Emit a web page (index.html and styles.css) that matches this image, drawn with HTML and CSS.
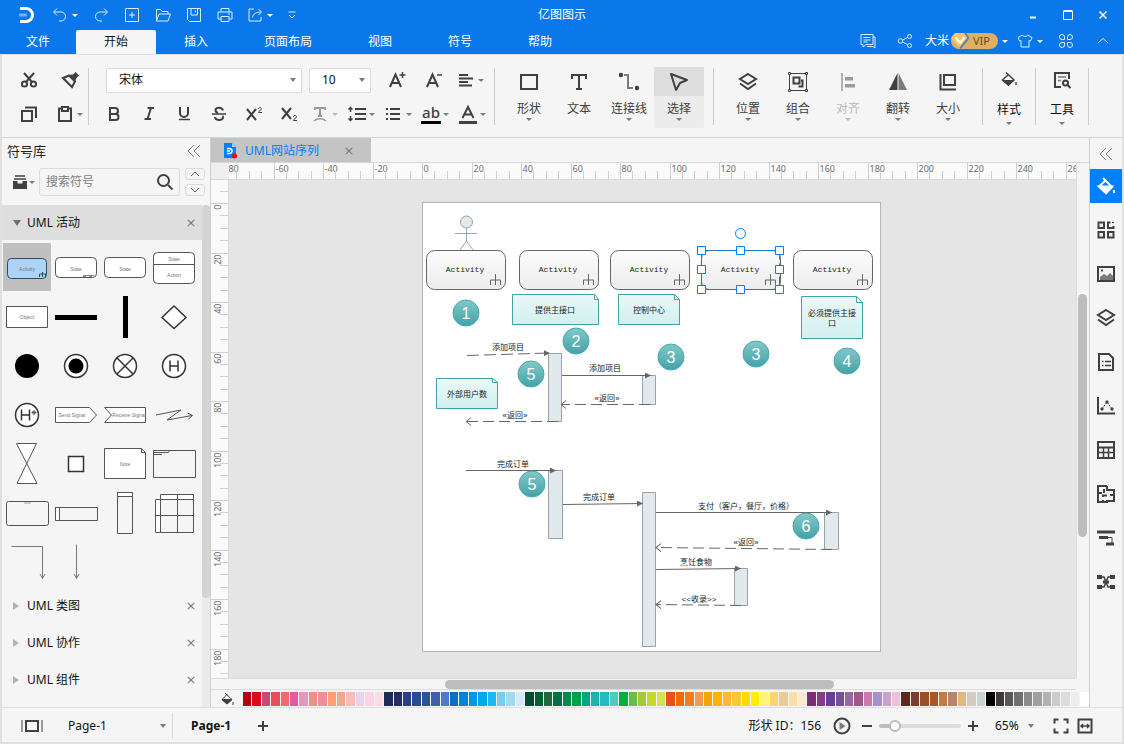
FILE: index.html
```
<!DOCTYPE html>
<html lang="zh-CN">
<head>
    <meta charset="UTF-8">
    <title>亿图图示</title>
    <link rel="stylesheet" href="styles.css">
</head>
<body>
<div class="app">
    <header class="header">
        <div class="titlebar">
            <div class="quick">
                <svg class="logo" viewBox="0 0 16 18"><path d="M1 2.500h6a6.500 6.500 0 0 1 0 13H1" fill="none" stroke="#fff" stroke-width="3"/><path d="M0 9h8" stroke="#6db3ff" stroke-width="3"/></svg>
                <button class="q split" aria-label="撤销"><svg class="thin" viewBox="0 0 16 16"><path d="M5 1.500L1.500 5 5 8.500M2 5h7a4 4 0 0 1 0 9H7"/></svg><i class="caret"></i></button>
                <button class="q" aria-label="重做"><svg class="thin" viewBox="0 0 16 16"><path d="M11 1.500L14.500 5 11 8.500M14 5H7a4 4 0 0 0 0 9h2"/></svg></button>
                <button class="q" aria-label="新建"><svg class="thin" viewBox="0 0 16 16"><path d="M1.500 1.500h13v13h-13zM8 5v6M5 8h6"/></svg></button>
                <button class="q" aria-label="打开"><svg class="thin" viewBox="0 0 16 16"><path d="M1.500 14V2.500h4l1.500 2h6V7M1.500 14L4 7h11.500L13 14z"/></svg></button>
                <button class="q" aria-label="保存"><svg class="thin" viewBox="0 0 16 16"><path d="M1.500 1.500h13v13h-11l-2-2zM5 2v6h6.500V2M9.500 3.500v2"/></svg></button>
                <button class="q" aria-label="打印"><svg class="thin" viewBox="0 0 16 16"><path d="M4 5V1.500h8V5M4 12H1V5h14v7h-3M4 9.500h8v5H4zM11 7h2"/></svg></button>
                <button class="q split" aria-label="导出"><svg class="thin" viewBox="0 0 16 16"><path d="M7 2H2v12h12v-4M5.500 10.500C6 7 9 5 14 5M11.500 2L14.500 5l-3 3"/></svg><i class="caret"></i></button>
                <button class="q more" aria-label="更多"><svg class="thin" viewBox="0 0 16 16"><path d="M4.500 5h7M5 8l3 3 3-3"/></svg></button>
            </div>
            <div class="title">亿图图示</div>
            <div class="window">
                <button aria-label="最小化"><svg viewBox="0 0 10 10"><path d="M2 7.500h6" stroke-width="2"/></svg></button>
                <button aria-label="最大化"><svg viewBox="0 0 10 10"><path d="M.500 1.500h9V9.500h-9zM.500 .500h9"/></svg></button>
                <button aria-label="关闭"><svg viewBox="0 0 10 10"><path d="M1.500 1.500l7 7M8.500 1.500l-7 7" stroke-width="1.500"/></svg></button>
            </div>
        </div>
        <div class="menubar">
            <nav class="menu">
                <button>文件</button>
                <button class="active">开始</button>
                <button>插入</button>
                <button>页面布局</button>
                <button>视图</button>
                <button>符号</button>
                <button>帮助</button>
            </nav>
            <div class="account">
                <button class="q" aria-label="评论"><svg class="thin" viewBox="0 0 16 16"><path d="M13 11.500V1.500H1v10h2V14l3-2.500zM13 4h2v11l-2-1.500H7M3.500 4.500h7M3.500 7h7M3.500 9h4"/></svg></button>
                <button class="q share" aria-label="分享"><svg class="thin" viewBox="0 0 16 16"><circle cx="3.500" cy="8" r="2.300"/><circle cx="12.500" cy="3.500" r="2"/><circle cx="12.500" cy="12.500" r="2"/><path d="M5.500 7l5-2.500M5.500 9l5 2.500"/></svg></button>
                <span>大米</span>
                <button class="vip"><svg viewBox="0 0 18 16"><path d="M4 0h10l4 5-9 11L0 5z" fill="#f6c766"/><path d="M4.500 4.500L9 10l4.500-5.500" fill="none" stroke="#fff" stroke-width="2"/><path d="M14 0l3.500 5L9 15.500" fill="none" stroke="#5d87b0"/></svg>VIP</button>
                <i class="caret"></i>
                <button class="q split shirt" aria-label="主题"><svg class="thin" viewBox="0 0 16 16"><path d="M5.500 2L1 4.500 2.500 8 4 7.500V14h8V7.500l1.500.500L15 4.500 10.500 2C9.500 4 6.500 4 5.500 2z"/></svg><i class="caret"></i></button>
                <button class="q apps" aria-label="应用"><svg class="thin" viewBox="0 0 16 16"><path d="M6.500 6.500H4A2.500 2.500 0 1 1 6.500 4zM9.500 6.500H12A2.500 2.500 0 1 0 9.500 4zM6.500 9.500H4A2.500 2.500 0 1 0 6.500 12zM9.500 9.500H12A2.500 2.500 0 1 1 9.500 12z"/></svg></button>
                <button class="q" aria-label="收起"><svg class="thin" viewBox="0 0 16 16"><path d="M3 10l5-4.500 5 4.500"/></svg></button>
            </div>
        </div>
    </header>

    <div class="toolbar">
        <div class="group clipboard">
            <div class="row">
                <button class="tool" aria-label="剪切"><svg viewBox="0 0 20 20"><circle cx="5.500" cy="14" r="2.600"/><circle cx="14.500" cy="14" r="2.600"/><path d="M7 12l8-9M13 12L5 3"/></svg></button>
                <button class="tool" aria-label="格式刷"><svg viewBox="0 0 20 20"><path d="M3 8l6-2.500 6 6L12 17z"/><path d="M8.500 5l6.500 6.500 1.500-3.500L19 5.500 15.500 2 13 4.500z" fill="currentColor" stroke="none"/></svg></button>
            </div>
            <div class="row">
                <button class="tool" aria-label="复制"><svg viewBox="0 0 20 20"><path d="M3 7h10v10H3zM6 3.500h11V14"/></svg></button>
                <button class="tool split" aria-label="粘贴"><svg viewBox="0 0 20 20"><path d="M6.500 4.500H4V17h12V4.500h-2.500M7 3h6v4H7z"/></svg><i class="caret"></i></button>
            </div>
        </div>
        <hr class="first">
        <div class="group">
            <div class="row">
                <label class="pick font"><select aria-label="字体"><option>宋体</option></select></label>
                <label class="pick size"><select aria-label="字号"><option>10</option></select></label>
                <button class="tool" aria-label="增大字号"><svg viewBox="0 0 20 20"><path d="M3 17L8.500 4.500 14 17M5 13h7"/><path d="M12.500 5h6M15.500 2v6" stroke-width="1.500"/></svg></button>
                <button class="tool" aria-label="减小字号"><svg viewBox="0 0 20 20"><path d="M3 17L8.500 4.500 14 17M5 13h7"/><path d="M13 5h5" stroke-width="1.500"/></svg></button>
                <button class="tool split" aria-label="对齐方式"><svg viewBox="0 0 20 20"><path d="M3 5h9M3 8.500h14M3 12h9M3 15.500h13"/></svg><i class="caret"></i></button>
            </div>
            <div class="row second">
                <button class="tool" aria-label="加粗"><svg viewBox="0 0 20 20"><path d="M6 4h5a3 3 0 0 1 0 6H6zM6 10h5.500a3 3 0 0 1 0 6H6z"/></svg></button>
                <button class="tool" aria-label="斜体"><svg viewBox="0 0 20 20"><path d="M8.500 4H15M5.500 15H12M12 4L8.500 15"/></svg></button>
                <button class="tool" aria-label="下划线"><svg viewBox="0 0 20 20"><path d="M6 3v6a4 4 0 0 0 8 0V3"/><path d="M5 15.500h11" stroke-width="1.500"/></svg></button>
                <button class="tool" aria-label="删除线"><svg viewBox="0 0 20 20"><path d="M14 6.500C13 3 7 3 6.500 6c0 1.500 1 2.500 2.500 3M6 13c.500 4 8 4 8 .500 0-.500 0-1-.500-1.500"/><path d="M3 10h14" stroke-width="1.500"/></svg></button>
                <button class="tool" aria-label="上标"><svg viewBox="0 0 20 20"><path d="M3 5l9 11M12 5L3 16"/><path d="M14.500 5c0-2 3-2 3 0 0 1-3 2-3 3.500h3.500" stroke-width="1"/></svg></button>
                <button class="tool" aria-label="下标"><svg viewBox="0 0 20 20"><path d="M3 4l9 11M12 4L3 15"/><path d="M14.500 13c0-2 3-2 3 0 0 1-3 2-3 3.500h3.500" stroke-width="1"/></svg></button>
                <button class="tool split" disabled aria-label="文字效果"><svg viewBox="0 0 20 20"><path d="M5 6V4h10v2M10 4v8M8 12h4"/><path d="M4 17c3-3 9-3 12 0" stroke-width="1.500"/></svg><i class="caret"></i></button>
                <button class="tool split" aria-label="行距"><svg viewBox="0 0 20 20"><path d="M8 5h11M8 10h11M8 15h11"/><path d="M3.500 8V4M3.500 12v4M1.500 5.500l2-2 2 2M1.500 14.500l2 2 2-2" stroke-width="1.500"/></svg><i class="caret"></i></button>
                <button class="tool split" aria-label="项目符号"><svg viewBox="0 0 20 20"><path d="M6 5H16M6 10H16M6 15H16M2 5h2M2 10h2M2 15h2"/></svg><i class="caret"></i></button>
                <button class="tool split" aria-label="突出显示"><span class="mark">ab</span><i class="caret"></i></button>
                <button class="tool split" aria-label="字体颜色"><svg viewBox="0 0 20 20"><path d="M4.500 14L10 3l5.500 11M6.500 10.500h7"/><path d="M1 18.500h18" stroke-width="3"/></svg><i class="caret"></i></button>
            </div>
        </div>
        <hr class="after-font">
        <div class="group bigs">
            <button class="big"><span class="pic"><svg viewBox="0 0 20 20"><path d="M2 3h16v14H2z"/></svg></span>形状<i class="caret"></i></button>
            <button class="big"><span class="pic"><svg viewBox="0 0 20 20"><path d="M3 7V3h14v4M10 3v14M7 17h6"/></svg></span>文本</button>
            <button class="big"><span class="pic"><svg viewBox="0 0 20 20"><path d="M5 3h4v13h5" stroke="#7b7b7b"/><circle cx="2" cy="3" r="1.200" fill="currentColor"/><circle cx="18" cy="16" r="1.200" fill="currentColor"/></svg></span>连接线<i class="caret"></i></button>
            <button class="big on"><span class="pic"><svg viewBox="0 0 20 20"><path d="M2 2l16 6-7 3-4 7z" stroke-linejoin="round"/></svg></span>选择<i class="caret"></i></button>
        </div>
        <hr>
        <div class="group bigs">
            <button class="big"><span class="pic"><svg viewBox="0 0 20 20"><path d="M10 2l8 5-8 5-8-5zM2 11.500l8 5.500 8-5.500"/></svg></span>位置<i class="caret"></i></button>
            <button class="big"><span class="pic"><svg viewBox="0 0 20 20"><path d="M1.500 1.500h17v17h-17z" stroke-width="1"/><path d="M5.500 5.500h6v6h-6zM13 8.500h1.500v6h-4"/><path d="M.500 .500h2v2h-2zM17.500 .500h2v2h-2zM.500 17.500h2v2h-2zM17.500 17.500h2v2h-2z" stroke-width="1" fill="#f5f5f5"/></svg></span>组合<i class="caret"></i></button>
            <button class="big" disabled><span class="pic"><svg viewBox="0 0 20 20"><path d="M4 1v18" stroke-width="1.500"/><path d="M7 5h8v3.500H7zM7 12h10v3.500H7z" fill="currentColor" stroke="none"/></svg></span>对齐<i class="caret"></i></button>
            <button class="big"><span class="pic"><svg viewBox="0 0 20 20"><path d="M9.500 1v17H1z" fill="currentColor" stroke="none"/><path d="M10.500 1v17H19z" fill="#7b7b7b" stroke="none"/></svg></span>翻转<i class="caret"></i></button>
            <button class="big"><span class="pic"><svg viewBox="0 0 20 20"><path d="M6 3h11v10H6zM2.500 2v15.500H18"/></svg></span>大小<i class="caret"></i></button>
        </div>
        <hr class="before-style">
        <button class="big low"><span class="pic"><svg viewBox="0 0 20 20"><path d="M7 2.500l8 7.500-5.500 5L3.500 10l6-5.500" stroke-width="1.500"/><path d="M3 10h12l-5.500 6z" fill="currentColor" stroke="none"/><path d="M17 12v3" stroke="#7b7b7b"/></svg></span>样式<i class="caret"></i></button>
        <hr class="tight">
        <button class="big low"><span class="pic"><svg viewBox="0 0 20 20"><path d="M9 17H3V3h14v6"/><path d="M6 7h8M6 10.500h3" stroke-width="1.500" stroke="#7b7b7b"/><circle cx="13.500" cy="13" r="2.500"/><path d="M15.500 15l3 3"/></svg></span>工具<i class="caret"></i></button>
        <hr class="tight">
    </div>

    <main class="body">
        <aside class="sidebar">
            <div class="side-title"><h2>符号库</h2><button class="fold" aria-label="折叠"><svg viewBox="0 0 14 14"><path d="M7 1L1 7l6 6M13 1L7 7l6 6"/></svg></button></div>
            <div class="search-row">
                <button class="lib" aria-label="符号库菜单"><svg viewBox="0 0 16 16"><path d="M3 2h10M2 5h12" stroke-width="1.500"/><path d="M1 7h4.500v2.500h5V7H15v8H1z" fill="currentColor" stroke="none"/></svg><i class="caret"></i></button>
                <label class="search"><input type="text" placeholder="搜索符号" aria-label="搜索符号"><svg viewBox="0 0 18 18"><circle cx="7.500" cy="7.500" r="5.500"/><path d="M12 12l4.500 4.500"/></svg></label>
                <div class="steps">
                    <button aria-label="上一个"><svg viewBox="0 0 10 6"><path d="M1 5l4-4 4 4"/></svg></button>
                    <button aria-label="下一个"><svg viewBox="0 0 10 6"><path d="M1 1l4 4 4-4"/></svg></button>
                </div>
            </div>
            <div class="libs">
                <div class="lib-list">
                    <div class="lib-head open"><button class="name"><i></i>UML 活动</button><button class="x" aria-label="关闭"></button></div>
                    <div class="shapes">
                        <button class="picked" aria-label="Activity"><svg viewBox="0 0 48 48"><rect x="4.500" y="15.500" width="39" height="20" rx="4" fill="#add4f5" stroke="#2c4a66"/><text x="24" y="28">Activity</text><path d="M36.500 34v-3h6v3M39.500 29v5" stroke="#2c4a66"/></svg></button>
                        <button aria-label="Submachine state"><svg viewBox="0 0 48 48"><rect class="w" x="3.500" y="14.500" width="41" height="20" rx="4"/><text x="24" y="28">State</text><path d="M31 32.500h11M31 33.500h3M37 33.500h3" opacity=".7"/></svg></button>
                        <button aria-label="State"><svg viewBox="0 0 48 48"><rect class="w" x="3.500" y="14.500" width="41" height="20" rx="4"/><text x="24" y="28">State</text></svg></button>
                        <button aria-label="State action"><svg viewBox="0 0 48 48"><rect class="w" x="3.500" y="9.500" width="41" height="31" rx="4"/><path d="M3.500 21.500h41"/><text x="24" y="18">State</text><text x="24" y="34">Action</text></svg></button>
                        <button aria-label="Object"><svg viewBox="0 0 48 48"><path class="w" d="M3.500 14.500h41v21h-41z"/><text x="24" y="27">Object</text></svg></button>
                        <button aria-label="水平分叉"><svg viewBox="0 0 48 48"><path class="k" d="M3 23h42v5H3z"/></svg></button>
                        <button aria-label="垂直分叉"><svg viewBox="0 0 48 48"><path class="k" d="M22 4h5v42h-5z"/></svg></button>
                        <button aria-label="判断"><svg viewBox="0 0 48 48"><path class="w t" d="M24 14l12 11.500-12 11-12-11z"/></svg></button>
                        <button aria-label="起点"><svg viewBox="0 0 48 48"><circle class="k" cx="24" cy="25" r="12"/></svg></button>
                        <button aria-label="终点"><svg viewBox="0 0 48 48"><circle class="w t" cx="24" cy="25" r="11.500"/><circle class="k" cx="24" cy="25" r="7.500"/></svg></button>
                        <button aria-label="流终止"><svg viewBox="0 0 48 48"><circle class="w t" cx="24" cy="25" r="11.500"/><path class="t" d="M16 17l16 16M32 17L16 33"/></svg></button>
                        <button aria-label="历史"><svg viewBox="0 0 48 48"><circle class="w t" cx="24" cy="25" r="11.500"/><path class="t" d="M20 19.500v11M28 19.500v11M20 25h8"/></svg></button>
                        <button aria-label="深历史"><svg viewBox="0 0 48 48"><circle class="w t" cx="24" cy="25" r="11.500"/><path class="t" d="M18.500 19.500v11M26.500 19.500v11M18.500 25h8"/><path d="M31 20v5M28.500 22.500h5M29.500 21l3 3M32.500 21l-3 3"/></svg></button>
                        <button aria-label="Send Signal"><svg viewBox="0 0 48 48"><path class="w" d="M3.500 17.500h34l7 7.500-7 7.500h-34z"/><text x="20" y="27">Send Signal</text></svg></button>
                        <button aria-label="Receive Signal"><svg viewBox="0 0 48 48"><path class="w" d="M3.500 17.500h41v15h-41l7-7.500z"/><text x="28" y="27">Receive Signal</text></svg></button>
                        <button aria-label="中断"><svg viewBox="0 0 48 48"><path d="M6 25l25-5-14 10 25-4.500M37.500 23l5 2.500-4 3.500"/></svg></button>
                        <button aria-label="时间事件"><svg viewBox="0 0 48 48"><path class="w" d="M13.500 4.500h20L14 44.500h20z"/></svg></button>
                        <button aria-label="引脚"><svg viewBox="0 0 48 48"><path class="w t" d="M16.500 17.500h15v15h-15z"/></svg></button>
                        <button aria-label="Note"><svg viewBox="0 0 48 48"><path class="w" d="M3.500 9.500h37l4 4v26h-41zM40.500 9.500v4h4"/><text x="24" y="27">Note</text></svg></button>
                        <button aria-label="框架"><svg viewBox="0 0 48 48"><path d="M3.500 11.500h42v27h-42zM3.500 13.500h15l1-2M4 15.500h8"/></svg></button>
                        <button aria-label="区域"><svg viewBox="0 0 48 48"><rect x="3.500" y="13.500" width="42" height="24" rx="2"/><path d="M21 15h7" opacity=".5"/></svg></button>
                        <button aria-label="水平泳道"><svg viewBox="0 0 48 48"><path class="w" d="M3.500 19.500h4v13h-4z"/><path d="M3.500 19.500h42v13h-42z"/></svg></button>
                        <button aria-label="垂直泳道"><svg viewBox="0 0 48 48"><path class="w" d="M16.500 4.500h15v4h-15z"/><path d="M16.500 4.500h15v41h-15z"/></svg></button>
                        <button aria-label="分区"><svg viewBox="0 0 48 48"><path class="w" d="M10.500 6.500h33v5h-33zM5.500 11.500h5v33h-5z"/><path d="M10.500 11.500h33v33h-33zM27.500 6.500v38M5.500 27.500h38"/></svg></button>
                        <button aria-label="折线"><svg viewBox="0 0 48 48"><path class="g" d="M8.500 9.500h31v32M37 37l2.500 4.500L42 37"/></svg></button>
                        <button aria-label="直线"><svg viewBox="0 0 48 48"><path class="g" d="M24.500 7.500v34M22 37l2.500 4.500L27 37"/></svg></button>
                    </div>
                    <div class="lib-head"><button class="name"><i></i>UML 类图</button><button class="x" aria-label="关闭"></button></div>
                    <div class="lib-head"><button class="name"><i></i>UML 协作</button><button class="x" aria-label="关闭"></button></div>
                    <div class="lib-head"><button class="name"><i></i>UML 组件</button><button class="x" aria-label="关闭"></button></div>
                </div>
                <div class="side-scroll"><div class="thumb"></div></div>
            </div>
        </aside>

        <section class="editor">
            <div class="doc-tabs">
                <div class="doc-tab">
                    <svg viewBox="0 0 14 16"><path d="M1 0h8l4 4v11H1z" fill="#0080ff"/><path d="M9 0l4 4H9z" fill="#9fceff"/><path d="M4 5.500h2.500a2.500 2.500 0 0 1 0 5H4M4 8h3" fill="none" stroke="#fff" stroke-width="1.500"/><circle cx="11.500" cy="13" r="2.500" fill="#f00"/></svg>
                    <a href="#paper">UML网站序列</a>
                    <button class="x" aria-label="关闭"></button>
                </div>
            </div>
            <div class="corner"></div>
            <svg class="ruler-h" id="ruler-h"></svg>
            <svg class="ruler-v" id="ruler-v"></svg>
            <div class="canvas">
                <svg class="paper" id="paper" width="459" height="450" viewBox="422 202 459 450">
                    <defs>
                        <linearGradient id="grey" x2="0" y2="1"><stop offset="0" stop-color="#fcfcfc"/><stop offset="1" stop-color="#ededed"/></linearGradient>
                        <linearGradient id="mint" x2="0" y2="1"><stop offset="0" stop-color="#eaf8f7"/><stop offset="1" stop-color="#d0f0ef"/></linearGradient>
                        <linearGradient id="teal" x2="0" y2="1"><stop offset="0" stop-color="#82c8c9"/><stop offset="1" stop-color="#41a3a8"/></linearGradient>
                        <marker id="solid" markerWidth="7" markerHeight="6" refX="6" refY="3" orient="auto" markerUnits="userSpaceOnUse"><path d="M0 0l6 3-6 3z" fill="#666"/></marker>
                        <marker id="back" markerWidth="7" markerHeight="9" refX="6" refY="4.500" orient="auto" markerUnits="userSpaceOnUse"><path d="M1 .500l5 4-5 4" fill="none" stroke="#666"/></marker>
                        <g id="activity">
                            <rect x=".5" y=".5" width="79" height="39" rx="8" fill="url(#grey)" stroke="#666"/>
                            <text x="39" y="22">Activity</text>
                            <path d="M64.500 35v-5h10v5M69.500 24v11" fill="none" stroke="#666"/>
                        </g>
                        <circle id="ball" r="13" fill="url(#teal)" stroke="#4aa9ae"/>
                    </defs>

                    <g class="actor"><circle cx="466.500" cy="222" r="6"/><path d="M466.500 228v14M455 233.500h22M460 250l6.500-9 6.500 9"/></g>

                    <use href="#activity" x="426" y="250"/>
                    <use href="#activity" x="519" y="250"/>
                    <use href="#activity" x="610" y="250"/>
                    <use href="#activity" x="701" y="250"/>
                    <use href="#activity" x="793" y="250"/>

                    <g class="note">
                        <path d="M512.500 294.500h82l4 5v25h-86zM594.500 294.500v5h4"/>
                        <path d="M618.500 294.500h56l5 5v25h-61zM674.500 294.500v5h5"/>
                        <path d="M436.500 378.500h56l5 4v26h-61zM492.500 378.500v4h5"/>
                        <path d="M801.500 296.500h55l6 6v36h-61zM856.500 296.500v6h6"/>
                    </g>
                    <g class="life">
                        <path d="M548.500 353.500h13v68h-13z"/>
                        <path d="M642.500 375.500h13v29h-13z"/>
                        <path d="M548.500 470.500h14v68h-14z"/>
                        <path d="M642.500 492.500h13v154h-13z"/>
                        <path d="M824.500 512.500h14v37h-14z"/>
                        <path d="M734.500 568.500h13v37h-13z"/>
                    </g>
                    <g class="call">
                        <path class="dash" d="M467 355.500L550 353"/>
                        <path d="M562 375.500h89"/>
                        <path d="M466 470.500h90"/>
                        <path d="M563 504.500l80-1"/>
                        <path d="M656 512.500h176"/>
                        <path d="M656 569.500l85-1"/>
                    </g>
                    <g class="return">
                        <path d="M650 404.500h-89"/>
                        <path d="M558 421.500h-92"/>
                        <path d="M832 549.500l-176-2"/>
                        <path d="M741 605.500l-85-1"/>
                    </g>
                    <g class="balls">
                        <use href="#ball" x="466" y="313"/><text x="466" y="319">1</text>
                        <use href="#ball" x="576" y="341"/><text x="576" y="347">2</text>
                        <use href="#ball" x="531" y="374"/><text x="531" y="380">5</text>
                        <use href="#ball" x="671" y="357"/><text x="671" y="363">3</text>
                        <use href="#ball" x="756" y="354"/><text x="756" y="360">3</text>
                        <use href="#ball" x="847" y="361"/><text x="847" y="367">4</text>
                        <use href="#ball" x="532" y="484"/><text x="532" y="490">5</text>
                        <use href="#ball" x="806" y="526"/><text x="806" y="532">6</text>
                    </g>
                    <text x="555" y="313">提供主接口</text>
                    <text x="649" y="313">控制中心</text>
                    <text x="467" y="397">外部用户数</text>
                    <text x="832" y="316">必须提供主接</text>
                    <text x="832" y="326">口</text>
                    <text x="508" y="350">添加项目</text>
                    <text x="605" y="371">添加项目</text>
                    <text x="607" y="401">«返回»</text>
                    <text x="515" y="418">«返回»</text>
                    <text x="513" y="467">完成订单</text>
                    <text x="599" y="500">完成订单</text>
                    <text x="746" y="509">支付（客户，餐厅，价格）</text>
                    <text x="746" y="545">«返回»</text>
                    <text x="696" y="565">烹饪食物</text>
                    <text x="699" y="602">&lt;&lt;收录&gt;&gt;</text>

                    <g class="selection">
                        <path class="edge" d="M701.500 250.500h78v39h-78z"/>
                        <circle cx="740.500" cy="233.500" r="5"/>
                        <path d="M697.500 246.500h8v8h-8zM736.500 246.500h8v8h-8zM775.500 246.500h8v8h-8zM697.500 265.500h8v8h-8zM775.500 265.500h8v8h-8zM697.500 285.500h8v8h-8zM736.500 285.500h8v8h-8zM775.500 285.500h8v8h-8z"/>
                    </g>
                </svg>
            </div>
            <div class="vscroll"><div class="thumb"></div></div>
            <div class="hscroll"><div class="thumb"></div></div>
            <div class="palette">
                <button class="fill" aria-label="填充"><svg viewBox="0 0 14 14"><path d="M5 1l7 6.500L7 12 2 7.500l5-5"/><path d="M2 7.500h10L7 12z" fill="currentColor"/><path d="M13 10v3"/></svg></button>
                <div class="swatches" id="swatches"></div>
            </div>
        </section>

        <aside class="rail">
            <button class="fold" aria-label="折叠"><svg viewBox="0 0 14 14"><path d="M7 1L1 7l6 6M13 1L7 7l6 6"/></svg></button>
            <button class="on" aria-label="填充"><svg viewBox="0 0 20 20"><path d="M7 2l9 9-6 6-7-6.500 7-6.500"/><path d="M3 10.500h13l-6 6.500z" fill="currentColor"/><path d="M18 14v3"/></svg></button>
            <button aria-label="符号"><svg viewBox="0 0 20 20"><path d="M2.500 2.500H8V8H2.500zM2.500 12H8v5.500H2.500zM12 12h5.500v5.500H12zM14.500 2.500H12V8h5.500V6M17 2v1"/></svg></button>
            <button aria-label="图片"><svg viewBox="0 0 20 20"><path d="M2 3h16v14H2z"/><path d="M4 16v-3l4-3 3 2 3-3 3 3v4z" fill="#7b7b7b" stroke="none"/><path d="M5 6.500h2"/></svg></button>
            <button aria-label="图层"><svg viewBox="0 0 20 20"><path d="M10 2l8 5-8 5-8-5zM2 11.500l8 5.500 8-5.500"/></svg></button>
            <button aria-label="页面"><svg viewBox="0 0 20 20"><path d="M3 2h10l4 4v12H3z"/><path d="M6 9.500h1.500M9 9.500h6M6 13.500h1.500M9 13.500h6" stroke-width="1.500"/></svg></button>
            <button aria-label="图表"><svg viewBox="0 0 20 20"><path d="M2 1v16.500h17"/><path d="M6 13l5-7 5 7" stroke-width="1" stroke-dasharray="2 1"/><path d="M5 12h2v2H5zM10 5h2v2h-2zM15 12h2v2h-2z" fill="currentColor" stroke-width="1"/></svg></button>
            <button aria-label="表格"><svg viewBox="0 0 20 20"><path d="M2 2h16v16H2zM2 7.500h16"/><path d="M2 12.500h16M7.500 7v11M12.500 7v11" stroke-width="1.500"/></svg></button>
            <button aria-label="平面图"><svg viewBox="0 0 20 20"><path d="M11 2H2v16h9v-2M11 2v4h7v11h-7M2 9h4M8 5v4M18 11h-4M7 13v-1.500h4M7 16v2"/></svg></button>
            <button aria-label="甘特图"><svg viewBox="0 0 20 20"><path d="M1 4h18" stroke-width="3"/><path d="M3 9.500h9M10 16h8" stroke-width="3"/><path d="M12 9.500h4V16" stroke-width="1"/></svg></button>
            <button aria-label="思维导图"><svg viewBox="0 0 20 20"><path d="M5 5h3l2 5 2-5h3M5 15h3l2-5 2 5h3" stroke-width="1.500"/><path d="M1 3h5v4H1zM14 3h5v4h-5zM1 13h5v4H1zM14 13h5v4h-5zM7 8.500h6v3H7z" fill="currentColor" stroke="none"/></svg></button>
        </aside>
    </main>

    <footer class="status">
        <button class="view" aria-label="视图"><svg viewBox="0 0 24 14"><path d="M6 2h12v10H6z"/><path d="M2 1v12M22 1v12" stroke="#7b7b7b" stroke-width="1.500"/></svg></button>
        <label class="pick page"><select aria-label="页面"><option>Page-1</option></select></label>
        <button class="page-tab">Page-1</button>
        <button class="add" aria-label="添加页面"><svg viewBox="0 0 12 12"><path d="M6 1v10M1 6h10"/></svg></button>
        <span class="shape-id">形状 ID：156</span>
        <button class="play" aria-label="播放"><svg viewBox="0 0 18 18"><circle cx="9" cy="9" r="7.500"/><path d="M6.500 5l6 4-6 4z" fill="#7b7b7b" stroke="none"/></svg></button>
        <button class="zoom" aria-label="缩小"><svg viewBox="0 0 12 12"><path d="M1 6h10"/></svg></button>
        <input class="slider" type="range" min="0" max="100" value="14" aria-label="缩放">
        <button class="zoom" aria-label="放大"><svg viewBox="0 0 12 12"><path d="M6 1v10M1 6h10"/></svg></button>
        <label class="pick percent"><select aria-label="缩放比例"><option>65%</option></select></label>
        <button class="fit" aria-label="全屏"><svg viewBox="0 0 16 16"><path d="M1.500 5.500v-4h4M10.500 1.500h4v4M14.500 10.500v4h-4M5.500 14.500h-4v-4"/></svg></button>
        <button class="fit" aria-label="适合宽度"><svg viewBox="0 0 16 16"><path d="M1.500 1.500h13v13h-13z"/><path d="M4 8h8M6 6L4 8l2 2M10 6l2 2-2 2" stroke-width="1.500"/></svg></button>
    </footer>
</div>
<script src="script.js"></script>
</body>
</html>
```
FILE: styles.css
```
* {
    box-sizing: border-box;
}
body {
    margin: 0;
    font: 12px/16px "Noto Sans", "Noto Sans CJK SC", sans-serif;
    color: #222;
    background: #f5f5f5;
}
button {
    display: flex;
    align-items: center;
    justify-content: center;
    margin: 0;
    padding: 0;
    border: 0;
    background: none;
    font: inherit;
    color: inherit;
}
svg {
    display: block;
    flex: none;
}
button svg {
    width: 20px;
    height: 20px;
    fill: none;
    stroke: currentColor;
    stroke-width: 2;
}
h2 {
    margin: 0;
    font-size: 13px;
    font-weight: normal;
}
.caret {
    flex: none;
    border: 3px solid transparent;
    border-top-color: #7b7b7b;
    border-bottom: 0;
}
.app {
    display: flex;
    flex-direction: column;
    height: 100vh;
}

/* header */
.header {
    background: #0a78eb;
    color: #fff;
}
.header .caret {
    border-top-color: #fff;
}
.titlebar {
    display: grid;
    grid-template-columns: 1fr auto 1fr;
    align-items: center;
    height: 30px;
}
.quick {
    display: flex;
    align-items: center;
    padding-left: 19px;
}
.logo {
    width: 16px;
    height: 18px;
    margin-right: 10px;
}
.q {
    width: 31px;
    height: 24px;
}
.q svg {
    width: 16px;
    height: 16px;
    stroke-width: 1;
    color: #dcecff;
}
.q.split {
    width: 40px;
    gap: 4px;
}
.q.more {
    width: 24px;
}
.window {
    display: flex;
    justify-content: flex-end;
    padding-right: 4px;
}
.window button {
    width: 35px;
    height: 24px;
}
.window svg {
    width: 10px;
    height: 10px;
    stroke-width: 1;
}
.menubar {
    display: flex;
    justify-content: space-between;
    height: 24px;
}
.menu {
    display: flex;
}
.menu button {
    padding: 0 28px;
}
.menu button:first-child {
    padding: 0 26px;
}
.menu .active {
    background: #f5f5f5;
    color: #111;
    border-radius: 2px 2px 0 0;
}
.account {
    display: flex;
    align-items: center;
    height: 22px;
    padding-right: 6px;
}
.share {
    margin: 0 5px 0 6px;
}
.vip {
    gap: 4px;
    height: 16px;
    margin: 0 4px 0 2px;
    padding-right: 8px;
    border-radius: 8px;
    background: #e0b061;
    color: #6b4a17;
    font-size: 11px;
}
.vip svg {
    width: 18px;
    height: 16px;
    stroke: none;
}
.shirt {
    margin-left: 2px;
}
.apps {
    margin-right: 6px;
}

/* toolbar */
.toolbar {
    display: flex;
    align-items: flex-start;
    height: 84px;
    padding-top: 12px;
    border: solid #e0e0e0;
    border-width: 1px 2px;
    border-bottom-color: #d4d4d4;
    color: #404040;
}
.toolbar hr {
    width: 1px;
    height: 57px;
    margin: 1px 9px 0;
    border: 0;
    background: #ccc;
}
.toolbar .tight {
    margin: 1px 1px 0;
}
.toolbar .first {
    margin: 1px 7px 0 0;
}
.toolbar .after-font {
    margin-left: 3px;
}
.toolbar .before-style {
    margin-right: 1px;
}
.group {
    display: flex;
    flex-direction: column;
    gap: 8px;
}
.row {
    display: flex;
    align-items: center;
    height: 26px;
}
.clipboard {
    padding-left: 8px;
}
.clipboard .row {
    gap: 4px;
}
.tool {
    width: 37px;
    height: 26px;
}
.second .tool:not(.split) {
    width: 35px;
}
.tool.split {
    justify-content: flex-start;
    gap: 2px;
    padding-left: 4px;
}
.tool:disabled {
    color: #9a9a9a;
}
:disabled .caret {
    border-top-color: #bbb;
}
.mark {
    width: 20px;
    height: 20px;
    border-bottom: 3px solid #000;
    font-size: 15px;
    font-weight: 500;
    line-height: 16px;
}
.pick {
    position: relative;
    display: flex;
}
.pick::after {
    content: "";
    position: absolute;
    right: 6px;
    top: 50%;
    margin-top: -2px;
    border: 3px solid transparent;
    border-top: 4px solid #7b7b7b;
    border-bottom: 0;
    pointer-events: none;
}
.pick select {
    width: 100%;
    height: 25px;
    padding: 0 12px;
    appearance: none;
    border: 1px solid #dcdcdc;
    border-radius: 2px;
    background: #fff;
    font: inherit;
    color: #111;
}
.font {
    width: 196px;
    margin-left: 10px;
}
.size {
    width: 62px;
    margin: 0 7px;
}
.bigs {
    flex-direction: row;
    gap: 0;
}
.big {
    flex-direction: column;
    justify-content: flex-start;
    width: 50px;
    height: 61px;
    white-space: nowrap;
}
.big .pic {
    display: flex;
    align-items: center;
    justify-content: center;
    width: 100%;
    height: 29px;
    margin-bottom: 5px;
    color: #404040;
}
.big .caret {
    margin-top: 1px;
}
.big:disabled {
    color: #bbb;
}
.big:disabled .pic {
    color: #9a9a9a;
}
.big.on {
    border-radius: 2px;
    background: #ececec;
}
.big.on .pic {
    background: #dedede;
}
.big.low {
    color: #111;
}
.big.low .pic {
    height: 26px;
    margin-bottom: 9px;
}
.big.low .caret {
    margin-top: 4px;
}

/* main area */
.body {
    flex: 1;
    display: grid;
    grid-template-columns: 209px 1fr 33px;
    min-height: 0;
    border: solid #e0e0e0;
    border-width: 0 2px;
}
.sidebar {
    display: flex;
    flex-direction: column;
    min-height: 0;
    border-right: 1px solid #d0d0d0;
}
.side-title {
    display: flex;
    align-items: center;
    justify-content: space-between;
    height: 26px;
    padding: 0 9px 0 5px;
}
.fold svg {
    width: 14px;
    height: 14px;
    stroke: #7b7b7b;
    stroke-width: 1;
}
.search-row {
    display: flex;
    gap: 5px;
    padding: 4px 5px 9px 11px;
}
.lib {
    gap: 1px;
    width: 21px;
    color: #404040;
}
.lib svg {
    width: 16px;
    height: 16px;
}
.search {
    flex: 1;
    display: flex;
    align-items: center;
    min-width: 0;
    height: 28px;
    padding: 0 5px 0 6px;
    border: 1px solid #dcdcdc;
    border-radius: 3px;
}
.search input {
    flex: 1;
    min-width: 0;
    padding: 0;
    border: 0;
    background: none;
    font: inherit;
}
.search input::placeholder {
    color: #808080;
}
.search svg {
    width: 18px;
    height: 18px;
    fill: none;
    stroke: #404040;
    stroke-width: 2;
}
.steps {
    display: flex;
    flex-direction: column;
    gap: 4px;
}
.steps button {
    width: 20px;
    height: 12px;
    border: 1px solid #dcdcdc;
    border-radius: 3px;
}
.steps svg {
    width: 10px;
    height: 6px;
    stroke: #555;
    stroke-width: 1;
}
.libs {
    flex: 1;
    display: flex;
    min-height: 0;
    overflow: hidden;
}
.lib-list {
    flex: 1;
}
.lib-head {
    display: flex;
    align-items: center;
    justify-content: space-between;
    height: 37px;
    padding: 0 5px 0 11px;
    color: #111;
}
.lib-head.open {
    height: 35px;
    background: #dedede;
}
.name i {
    width: 14px;
}
.name i::before {
    content: "";
    display: block;
    width: 0;
    border: 4px solid transparent;
    border-left: 6px solid #b4b4b4;
    border-right: 0;
}
.open .name i::before {
    border: 4px solid transparent;
    border-top: 6px solid #707070;
    border-bottom: 0;
}
.x {
    width: 12px;
    height: 12px;
    color: #7b7b7b;
    font: 13px/12px "DejaVu Sans", sans-serif;
}
.x::before {
    content: "×";
}
.shapes {
    display: grid;
    grid-template-columns: repeat(4, 49px);
    grid-auto-rows: 49px;
    padding: 3px 1px 1px;
}
.shapes button {
    width: 48px;
    height: 48px;
}
.shapes .picked {
    background: #c0c0c0;
}
.shapes svg {
    width: 48px;
    height: 48px;
    stroke: #555;
    stroke-width: 1;
}
.shapes text {
    fill: #777;
    stroke: none;
    font: 5px "Liberation Sans", sans-serif;
    text-anchor: middle;
}
.shapes .w {
    fill: #fff;
}
.shapes .t {
    stroke: #333;
    stroke-width: 1.5;
}
.shapes .k {
    fill: #000;
    stroke: none;
}
.shapes .g {
    stroke: #777;
}
.side-scroll {
    width: 8px;
    background: #ebebeb;
}
.side-scroll .thumb {
    height: 393px;
    border-radius: 4px;
    background: #d4d4d4;
}

/* editor */
.editor {
    display: grid;
    grid-template-columns: 18px 1fr 13px;
    grid-template-rows: 25px 17px 1fr 12px 17px;
    min-width: 0;
    min-height: 0;
}
.doc-tabs {
    grid-column: 1 / -1;
    display: flex;
    border-bottom: 1px solid #d8d8d8;
}
.doc-tab {
    display: flex;
    align-items: center;
    width: 160px;
    padding: 2px 16px 0 12px;
    background: #c4c4c4;
}
.doc-tab svg {
    width: 14px;
    height: 16px;
}
.doc-tab a {
    flex: 1;
    margin-left: 8px;
    color: #0080ff;
    text-decoration: none;
}
.corner {
    background: #eee;
    border-bottom: 1px solid #d8d8d8;
}
.ruler-h,
.ruler-v {
    width: 100%;
    height: 100%;
    min-width: 0;
    min-height: 0;
    background: #fafafa;
    overflow: hidden;
}
.ruler-h {
    border-bottom: 1px solid #d8d8d8;
}
.ruler-v {
    grid-row: 3;
    grid-column: 1;
    border-right: 1px solid #d8d8d8;
}
.editor line {
    stroke: #d0d0d0;
}
.ruler-h text,
.ruler-v text {
    fill: #707070;
    font: 9px "Noto Sans", sans-serif;
}
.canvas {
    grid-row: 3;
    grid-column: 2;
    display: flex;
    justify-content: center;
    align-items: flex-start;
    padding: 22px 2px 0 0;
    background: #e5e5e5;
    overflow: hidden;
}
.vscroll {
    grid-row: 2 / 4;
    grid-column: 3;
    padding: 131px 2px 0 1px;
    border-left: 1px solid #dcdcdc;
}
.vscroll .thumb {
    height: 243px;
    border-radius: 5px;
    background: #bdbdbd;
}
.hscroll {
    grid-row: 4;
    grid-column: 1 / 3;
    padding: 1px 28% 0 27%;
    border-top: 1px solid #dcdcdc;
    border-bottom: 1px solid #dcdcdc;
}
.hscroll .thumb {
    height: 9px;
    border-radius: 5px;
    background: #bdbdbd;
}
.palette {
    grid-column: 1 / -1;
    display: flex;
    align-items: center;
    padding-right: 1px;
}
.fill {
    width: 32px;
}
.fill svg {
    width: 14px;
    height: 14px;
    color: #404040;
    stroke-width: 1;
}
.swatches {
    flex: 1;
    display: flex;
    gap: 1px;
    height: 14px;
}
.swatches button {
    flex: 1;
}

/* drawing */
.paper {
    background: #fff;
    outline: 1px solid #b5b5b5;
    outline-offset: -1px;
}
.paper text {
    fill: #222;
    font: 8px "Liberation Mono", "Noto Sans CJK SC", monospace;
    text-anchor: middle;
}
.paper .balls text {
    fill: #fff;
    font: 16px "Liberation Sans", sans-serif;
}
.actor {
    fill: #e1e9ec;
    stroke: #9aa0ad;
}
.actor path {
    fill: none;
}
.note {
    fill: url(#mint);
    stroke: #3fa3a8;
}
.life {
    fill: #e1e9ec;
    stroke: #9aa0ad;
}
.call path,
.return path {
    fill: none;
    stroke: #666;
    marker-end: url(#solid);
}
.return path {
    stroke-dasharray: 11 5;
    marker-end: url(#back);
}
.call .dash {
    stroke-dasharray: 12 5;
}
.selection {
    fill: #fff;
    stroke: #0080ff;
}
.selection .edge {
    fill: none;
    stroke-dasharray: 9 4;
}

/* right rail */
.rail {
    display: flex;
    flex-direction: column;
    border-left: 1px solid #d0d0d0;
    color: #404040;
}
.rail button {
    height: 44px;
}
.rail .fold {
    height: 31px;
}
.rail .on {
    height: 34px;
    margin-bottom: 5px;
    background: #0080ff;
    color: #fff;
}

/* status bar */
.status {
    display: flex;
    align-items: center;
    height: 37px;
    padding: 1px 29px 0 17px;
    border: 2px solid #e0e0e0;
    border-top-width: 1px;
    color: #111;
}
.status svg {
    width: 12px;
    height: 12px;
    color: #404040;
}
.status .view svg {
    width: 26px;
    height: 14px;
}
.status .pick select {
    border: 0;
    background: none;
}
.page {
    width: 128px;
    padding-left: 11px;
    border-right: 1px solid #d8d8d8;
}
.page-tab {
    margin: 0 26px 0 18px;
    font-weight: bold;
}
.shape-id {
    margin-left: auto;
}
.status .play {
    margin: 0 10px 0 12px;
}
.status .play svg {
    width: 18px;
    height: 18px;
}
.slider {
    width: 82px;
    height: 14px;
    margin: 0 6px;
    appearance: none;
    background: none;
}
.slider::-webkit-slider-runnable-track {
    height: 4px;
    border-radius: 2px;
    background: linear-gradient(90deg, #bdbdbd 16px, #dcdcdc 16px);
}
.slider::-webkit-slider-thumb {
    appearance: none;
    width: 12px;
    height: 12px;
    margin-top: -4px;
    border: 2px solid #bdbdbd;
    border-radius: 50%;
    background: #fff;
}
.percent {
    width: 57px;
    margin: 0 13px 0 4px;
}
.status .fit svg {
    width: 16px;
    height: 16px;
}
.fit + .fit {
    margin-left: 8px;
}
```
FILE: script.js
```
const NS = 'http://www.w3.org/2000/svg';
const STEP = 12.375; // pixels for 5 units at 65%

const add = (parent, name, attrs, text) => {
    const el = document.createElementNS(NS, name);
    Object.keys(attrs).forEach(k => el.setAttribute(k, attrs[k]));
    if (text !== undefined) el.textContent = text;
    parent.appendChild(el);
};

const rulerH = document.getElementById('ruler-h');
for (let i = -16; i <= 53; i++) {
    const x = Math.round(193 + i * STEP) + .5;
    const major = i % 4 === 0;
    add(rulerH, 'line', { x1: x, x2: x, y1: major ? 0 : 8, y2: 17 });
    if (major) add(rulerH, 'text', { x: x + 1, y: 9 }, i * 5);
}

const rulerV = document.getElementById('ruler-v');
for (let i = -1; i <= 38; i++) {
    const y = Math.round(23 + i * STEP) + .5;
    const major = i % 4 === 0;
    add(rulerV, 'line', { x1: major ? 0 : 9, x2: 18, y1: y, y2: y });
    if (major) add(rulerV, 'text', { transform: `translate(9 ${y + 1}) rotate(-90)`, 'text-anchor': 'end', y: 1 }, i * 5);
}

const colors = `b50012 dc0a1e c74a75 e84c5f ed6a70 e8589c e298b8 ef8f86 f28e9b ff9d73 f0a890 f7bcbc e8d4ea ffd2e4 ffdce4
1c2c55 252b66 2a3f87 2c4a94 2f5496 3f5fae 4a7cc8 0d6fc4 0084d6 0098e0 00a8ee 20b8f2 78ccee a4d8f0 d4eaf6
004d33 00602f 1e6a3c 006f45 008a4e 00a04a 00a486 1ab5a8 22bcc0 4fcbc0 00b140 6cbc45 a4ca3c c4d82e d4e05a
e8501c f06a00 f07d1e f29a56 f5a700 ffb200 ffb833 fac832 ffd900 ffee00 fff280 ffd46e ebcb96 ffddab ffe8d0
7b2d72 863c88 6a3e98 775098 9868a0 a05888 cc7ab0 a890d0 c8a4c8 eec0dc
5c2a1c 783c30 985028 ac5628 c47c40 b4866c e0b884 d4ccc4 c8d4cc
000000 3d3737 575757 707070 8a8a8a a0a0a0 b3b3b3 cccccc dcdcdc ededed ffffff`.split(/\s+/);
document.getElementById('swatches').innerHTML = colors
    .map(c => `<button style="background:#${c}" aria-label="#${c}"></button>`)
    .join('');
```
